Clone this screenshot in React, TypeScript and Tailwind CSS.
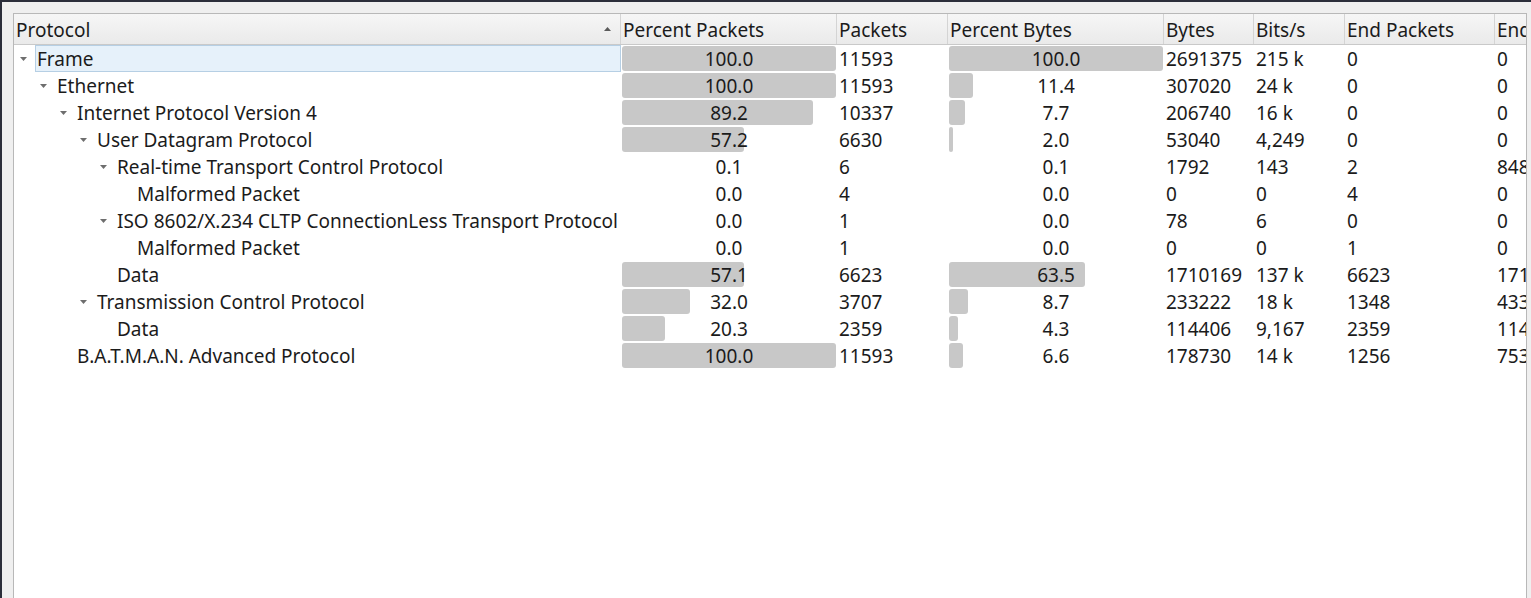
import React from "react";

type Row = {
  level: number;
  name: string;
  exp: boolean;
  pp: number;
  p: number;
  pb: number;
  b: number;
  bits: string;
  ep: number;
  eb: string;
  sel?: boolean;
};

const rows: Row[] = [
  { level: 0, name: "Frame", exp: true, pp: 100.0, p: 11593, pb: 100.0, b: 2691375, bits: "215 k", ep: 0, eb: "0", sel: true },
  { level: 1, name: "Ethernet", exp: true, pp: 100.0, p: 11593, pb: 11.4, b: 307020, bits: "24 k", ep: 0, eb: "0" },
  { level: 2, name: "Internet Protocol Version 4", exp: true, pp: 89.2, p: 10337, pb: 7.7, b: 206740, bits: "16 k", ep: 0, eb: "0" },
  { level: 3, name: "User Datagram Protocol", exp: true, pp: 57.2, p: 6630, pb: 2.0, b: 53040, bits: "4,249", ep: 0, eb: "0" },
  { level: 4, name: "Real-time Transport Control Protocol", exp: true, pp: 0.1, p: 6, pb: 0.1, b: 1792, bits: "143", ep: 2, eb: "848" },
  { level: 5, name: "Malformed Packet", exp: false, pp: 0.0, p: 4, pb: 0.0, b: 0, bits: "0", ep: 4, eb: "0" },
  { level: 4, name: "ISO 8602/X.234 CLTP ConnectionLess Transport Protocol", exp: true, pp: 0.0, p: 1, pb: 0.0, b: 78, bits: "6", ep: 0, eb: "0" },
  { level: 5, name: "Malformed Packet", exp: false, pp: 0.0, p: 1, pb: 0.0, b: 0, bits: "0", ep: 1, eb: "0" },
  { level: 4, name: "Data", exp: false, pp: 57.1, p: 6623, pb: 63.5, b: 1710169, bits: "137 k", ep: 6623, eb: "1710169" },
  { level: 3, name: "Transmission Control Protocol", exp: true, pp: 32.0, p: 3707, pb: 8.7, b: 233222, bits: "18 k", ep: 1348, eb: "433560" },
  { level: 4, name: "Data", exp: false, pp: 20.3, p: 2359, pb: 4.3, b: 114406, bits: "9,167", ep: 2359, eb: "114406" },
  { level: 2, name: "B.A.T.M.A.N. Advanced Protocol", exp: false, pp: 100.0, p: 11593, pb: 6.6, b: 178730, bits: "14 k", ep: 1256, eb: "753900" },
];

function Arrow() {
  return (
    <svg width="7" height="4" viewBox="0 0 7 4" className="shrink-0">
      <path d="M0 0 L7 0 L3.5 4 Z" fill="#6e6e6e" />
    </svg>
  );
}

function PctCell({ v, w }: { v: number; w: string }) {
  const bw = Math.round((v / 100) * 214);
  return (
    <div className={`${w} relative h-full shrink-0`}>
      {bw > 0 && (
        <div
          className="absolute left-[1px] top-[1px] h-[25px] rounded-[3px] bg-[#c8c8c8]"
          style={{ width: bw }}
        />
      )}
      <div className="relative flex h-full items-center justify-center pt-[2px]">{v.toFixed(1)}</div>
    </div>
  );
}

function TextCell({ t, w }: { t: string | number; w: string }) {
  return (
    <div className={`${w} flex h-full shrink-0 items-center overflow-hidden whitespace-nowrap pl-[2px] pt-[2px]`}>
      {t}
    </div>
  );
}

function Header({ t, w, last }: { t: string; w: string; last?: boolean }) {
  return (
    <div
      className={`${w} flex h-full shrink-0 items-center overflow-hidden whitespace-nowrap pl-[2px] pt-[2px] ${
        last ? "" : "border-r border-[#d4d4d4]"
      }`}
    >
      {t}
    </div>
  );
}

export default function App() {
  return (
    <div
      className="flex h-[598px] w-[1531px] overflow-hidden border-l-2 border-t-2 border-[#2b2e3a] bg-[#efefef] pl-[11px] pr-[4px] pt-[11px] text-[19px] text-[#1b1b1b]"
      style={{ fontFamily: '"Noto Sans", "Open Sans", sans-serif' }}
    >
      <div className="flex min-w-0 flex-1 flex-col overflow-hidden border-l border-r border-t border-[#b8b8b8] bg-white">
        <div className="flex h-[31px] shrink-0 border-b border-[#c9c9c9] bg-gradient-to-b from-[#f6f6f6] to-[#eaeaea]">
          <div className="flex h-full w-[607px] shrink-0 items-center justify-between border-r border-[#d4d4d4] pl-[2px] pr-[9px]">
            <span className="pt-[2px]">Protocol</span>
            <svg width="7" height="4" viewBox="0 0 7 4">
              <path d="M0 4 L7 4 L3.5 0 Z" fill="#5a5a5a" />
            </svg>
          </div>
          <Header t="Percent Packets" w="w-[216px]" />
          <Header t="Packets" w="w-[111px]" />
          <Header t="Percent Bytes" w="w-[216px]" />
          <Header t="Bytes" w="w-[90px]" />
          <Header t="Bits/s" w="w-[91px]" />
          <Header t="End Packets" w="w-[150px]" />
          <Header t="End Bytes" w="w-[60px]" last />
        </div>
        <div className="flex flex-col">
          {rows.map((r, i) => (
            <div key={i} className="flex h-[27px] shrink-0">
              <div className="flex h-full w-[607px] shrink-0 items-center overflow-hidden whitespace-nowrap">
                <div className="shrink-0" style={{ width: 6 + r.level * 20 }} />
                <div className="flex w-[15px] shrink-0 items-center">{r.exp && <Arrow />}</div>
                {r.sel ? (
                  <div className="flex h-full flex-1 items-center border border-[#b6cfe4] bg-[#e6f1fa] pl-[1px] pt-[2px]">
                    {r.name}
                  </div>
                ) : (
                  <div className="flex h-full flex-1 items-center pl-[2px] pt-[2px]">{r.name}</div>
                )}
              </div>
              <PctCell v={r.pp} w="w-[216px]" />
              <TextCell t={r.p} w="w-[111px]" />
              <PctCell v={r.pb} w="w-[216px]" />
              <TextCell t={r.b} w="w-[90px]" />
              <TextCell t={r.bits} w="w-[91px]" />
              <TextCell t={r.ep} w="w-[150px]" />
              <TextCell t={r.eb} w="w-[60px]" />
            </div>
          ))}
        </div>
      </div>
    </div>
  );
}
